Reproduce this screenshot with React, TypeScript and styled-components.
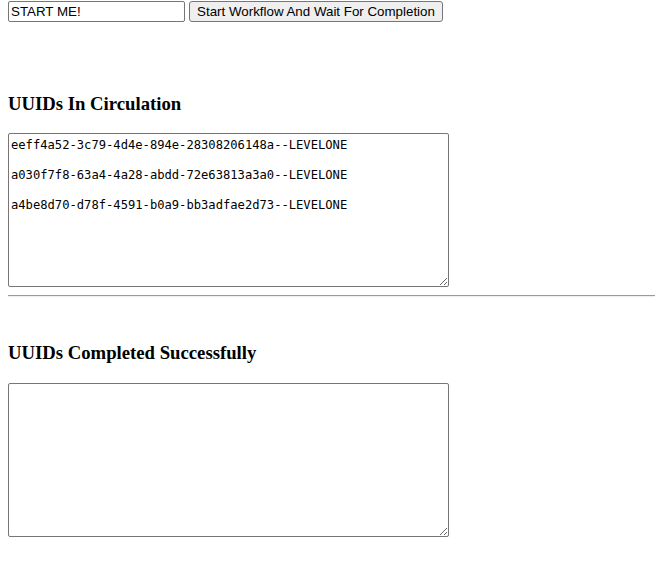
import React from "react";
import styled, { createGlobalStyle } from "styled-components";

const Global = createGlobalStyle`
  html, body { margin: 0; padding: 0; background: #fff; }
  body { padding: 1px 0 0 8px; font-family: "Liberation Serif", serif; color: #000; }
`;

const Toolbar = styled.div`
  display: flex;
  align-items: flex-start;
  gap: 4px;
`;

const TextInput = styled.input`
  box-sizing: border-box;
  width: 177px;
  height: 21px;
  margin: 0;
  padding: 1px 2px;
  border: 1px solid #767676;
  border-radius: 2px;
  font: 13.33px "Liberation Sans", Arial, sans-serif;
  color: #000;
  background: #fff;
`;

const Button = styled.button`
  box-sizing: border-box;
  width: 254px;
  height: 21px;
  margin: 0;
  padding: 1px 6px;
  border: 1px solid #767676;
  border-radius: 3px;
  background: #efefef;
  font: 13.33px "Liberation Sans", Arial, sans-serif;
  color: #000;
`;

const Heading = styled.h3<{ $top: number; $bottom: number }>`
  margin: ${(p) => p.$top}px 0 ${(p) => p.$bottom}px 0;
  font-family: "Liberation Serif", "Times New Roman", serif;
  font-size: 18.72px;
  font-weight: bold;
  line-height: 21px;
`;

const Log = styled.textarea`
  display: block;
  box-sizing: border-box;
  width: 441px;
  height: 154px;
  margin: 0;
  padding: 4px 2px 2px 2px;
  border: 1px solid #767676;
  border-radius: 2px;
  font-family: "DejaVu Sans Mono", "Liberation Mono", monospace;
  font-size: 12.15px;
  line-height: 15px;
  color: #000;
  background: #fff;
  resize: both;
  outline: none;
`;

const Rule = styled.hr`
  margin: 8px 0 0 0;
  border: none;
  border-top: 1px solid #9a9a9a;
  border-bottom: 1px solid #eeeeee;
  height: 0;
`;

const inCirculation = [
  "eeff4a52-3c79-4d4e-894e-28308206148a--LEVELONE",
  "a030f7f8-63a4-4a28-abdd-72e63813a3a0--LEVELONE",
  "a4be8d70-d78f-4591-b0a9-bb3adfae2d73--LEVELONE",
].join("\n\n");

export default function App() {
  return (
    <>
      <Global />
      <Toolbar>
        <TextInput defaultValue="START ME!" />
        <Button>Start Workflow And Wait For Completion</Button>
      </Toolbar>
      <Heading $top={71} $bottom={19}>UUIDs In Circulation</Heading>
      <Log readOnly value={inCirculation} />
      <Rule />
      <Heading $top={45} $bottom={20}>UUIDs Completed Successfully</Heading>
      <Log readOnly value="" />
    </>
  );
}
